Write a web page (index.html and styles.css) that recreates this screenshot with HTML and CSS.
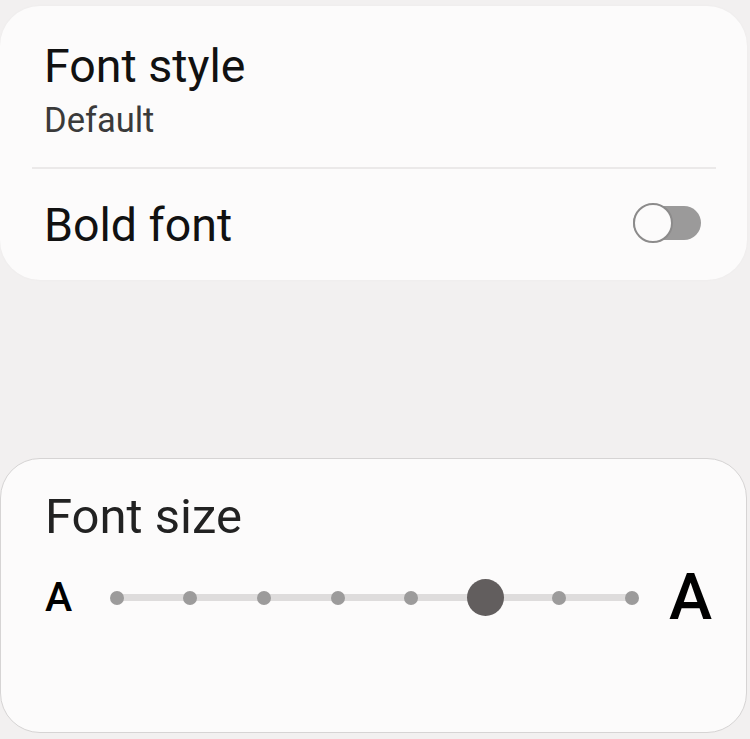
FILE: index.html
```html
<!DOCTYPE html>
<html lang="en">
<head>
  <meta charset="UTF-8">
  <meta name="viewport" content="width=device-width, initial-scale=1.0">
  <title>Font settings</title>
  <link rel="stylesheet" href="styles.css">
</head>
<body>
  <div class="card card-top">
    <div class="setting">
      <div class="setting-title">Font style</div>
      <div class="setting-sub">Default</div>
    </div>
    <div class="divider"></div>
    <div class="setting setting-row">
      <div class="setting-title">Bold font</div>
      <div class="toggle">
        <span class="toggle-knob"></span>
      </div>
    </div>
  </div>

  <div class="card card-bottom">
    <div class="setting-title size-title">Font size</div>
    <div class="size-row">
      <span class="size-a small">A</span>
      <div class="slider">
        <span class="stop"><i class="dot"></i></span>
        <span class="stop"><i class="dot"></i></span>
        <span class="stop"><i class="dot"></i></span>
        <span class="stop"><i class="dot"></i></span>
        <span class="stop"><i class="dot"></i></span>
        <span class="stop"><i class="thumb"></i></span>
        <span class="stop"><i class="dot"></i></span>
        <span class="stop"><i class="dot"></i></span>
      </div>
      <span class="size-a large">A</span>
    </div>
  </div>
</body>
</html>
```

FILE: styles.css
```css
* {
  margin: 0;
  padding: 0;
  box-sizing: border-box;
  font-family: Roboto, "Liberation Sans", sans-serif;
}

body {
  background-color: #f2f0f0;
  width: 750px;
  height: 739px;
  overflow: hidden;
}

/* Cards */
.card {
  background-color: #fcfbfb;
  border-radius: 40px;
  margin-right: 3px;
}

.card-top {
  margin-top: 6px;
  height: 274px;
  padding-top: 33px;
  box-shadow: 0 0 3px rgba(0, 0, 0, 0.03);
}

.card-bottom {
  margin-top: 178px;
  height: 275px;
  border: 1px solid #d6d4d4;
  padding: 30px 0 0 44px;
}

/* Setting rows */
.setting {
  padding: 0 0 0 44px;
}

.setting-title {
  font-size: 46.5px;
  line-height: 55px;
  color: #111;
}

.setting-sub {
  font-size: 34.5px;
  line-height: 40px;
  color: #3a3a3a;
  margin-top: 6px;
}

.divider {
  height: 2px;
  background-color: #ebe9e9;
  margin: 27px 31px 0 32px;
}

.setting-row {
  display: flex;
  align-items: center;
  justify-content: space-between;
  margin-top: 29px;
  padding-right: 46px;
}

/* Toggle switch */
.toggle {
  width: 68px;
  height: 34px;
  margin-top: -6px;
  background-color: #9b9a9a;
  border-radius: 17px;
  display: flex;
  align-items: center;
}

.toggle-knob {
  width: 40px;
  height: 40px;
  border-radius: 50%;
  background-color: #fcfbfb;
  border: 2px solid #8c8b8b;
}

/* Font size slider */
.size-title {
  font-size: 49px;
  color: #222;
}

.size-row {
  display: flex;
  align-items: center;
  margin-top: 21px;
  padding-right: 34px;
}

.size-a {
  font-weight: 500;
  line-height: 1;
  color: #000;
}

.size-a.small {
  font-size: 41px;
  margin-left: 0;
}

.size-a.large {
  font-size: 65px;
}

.slider {
  flex: 1;
  display: flex;
  justify-content: space-between;
  position: relative;
  margin: 0 18px 0 26px;
}

.slider::before {
  content: "";
  position: absolute;
  left: 18px;
  right: 18px;
  top: 15px;
  height: 7px;
  border-radius: 4px;
  background-color: #dedcdc;
}

.stop {
  width: 37px;
  height: 37px;
  display: flex;
  align-items: center;
  justify-content: center;
  position: relative;
}

.dot {
  width: 14px;
  height: 14px;
  border-radius: 50%;
  background-color: #9c9b9b;
}

.thumb {
  width: 37px;
  height: 37px;
  border-radius: 50%;
  background-color: #625e5e;
}
```
